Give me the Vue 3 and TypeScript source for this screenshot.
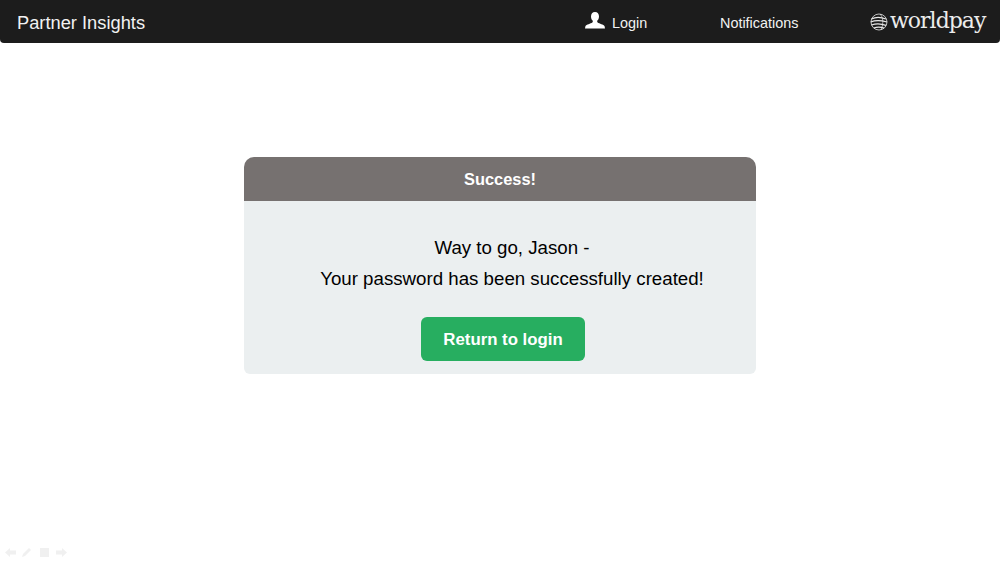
<template>
  <div class="page">
    <header class="topbar">
      <span class="brand">Partner Insights</span>
      <nav class="nav">
        <a class="nav-login">
          <svg class="user-icon" width="20" height="17" viewBox="0 0 20 17">
            <path d="M10 0C7.400 0 6 1.900 6 4.400c0 1.800.7 3.300 1.700 4.200.3.700.2 1.400-.3 1.800C5.600 11.700 1.500 12.200.4 14.200L0 16.500h20l-.4-2.300c-1.100-2-5.200-2.500-7-3.800-.5-.4-.6-1.100-.3-1.800 1-.9 1.700-2.400 1.700-4.200C14 1.900 12.600 0 10 0z" fill="#fff" />
          </svg>
          <span>Login</span>
        </a>
        <a class="nav-notifications">Notifications</a>
      </nav>
      <div class="logo">
        <svg class="globe" width="18" height="18" viewBox="0 0 18 18" fill="none" stroke="#e8e8e8">
          <circle cx="9" cy="9" r="8" stroke-width="0.800" />
          <path d="M1.500 6C5 4 10.500 3.800 16 6M.8 9c4-1.800 10-1.800 16.200 0M1.500 12c4-1.500 9.500-1.500 14.500.4M3.800 15c3-1.200 7-1.200 10.200.2" stroke-width="1.300" />
          <path d="M10 1c3 3 4 9 1 16" stroke-width="0.700" />
        </svg>
        <span class="logo-text">worldpay</span>
      </div>
    </header>

    <main class="main">
      <section class="card">
        <h1 class="card-title">Success!</h1>
        <div class="card-body">
          <p class="message">
            Way to go, {{ userName }} -<br />
            Your password has been successfully created!
          </p>
          <button class="return-btn">Return to login</button>
        </div>
      </section>
    </main>

    <div class="slide-controls">
      <svg width="11" height="9" viewBox="0 0 11 9"><path d="M0 4.500 5 0v2.500h6v4H5V9z" /></svg>
      <svg width="11" height="9" viewBox="0 0 11 9"><path d="M0 9l1-3 6-6 2 2-6 6z" /></svg>
      <svg width="11" height="9" viewBox="0 0 11 9"><path d="M1 0h9v9H1z" /></svg>
      <svg width="11" height="9" viewBox="0 0 11 9"><path d="M11 4.500 6 0v2.500H0v4h6V9z" /></svg>
    </div>
  </div>
</template>

<script setup lang="ts">
const userName = 'Jason';
</script>

<style>
html,
body {
  margin: 0;
  background: #fff;
}
</style>

<style scoped>
.page {
  position: relative;
  height: 563px;
  overflow: hidden;
  font-family: "Liberation Sans", Arial, sans-serif;
}

.topbar {
  display: flex;
  align-items: center;
  height: 43px;
  padding: 2px 14px 0 17px;
  box-sizing: border-box;
  background: #1c1c1c;
  border-radius: 0 0 4px 4px;
  color: #fff;
}

.brand {
  width: 128px;
  font-size: 18.300px;
  white-space: nowrap;
  color: #f2f2f2;
}

.nav {
  display: flex;
  align-items: center;
  margin-left: 440px;
  font-size: 14.400px;
  color: #f2f2f2;
}

.nav-login {
  display: flex;
  align-items: center;
  gap: 7px;
  width: 135px;
}

.user-icon {
  margin-top: -5px;
}

.nav-notifications {
  width: 150px;
  white-space: nowrap;
}

.logo {
  display: flex;
  align-items: center;
  gap: 2px;
  margin-top: -5px;
}

.globe {
  flex: none;
  margin-top: 3px;
}

.logo-text {
  font-family: "DejaVu Serif", serif;
  font-size: 22px;
  letter-spacing: -1px;
  color: #ececec;
}

.main {
  display: flex;
  justify-content: center;
  padding-top: 114px;
}

.card {
  width: 512px;
  height: 217px;
  background: #ebeff0;
  border-radius: 10px 10px 6px 6px;
  overflow: hidden;
}

.card-title {
  margin: 0;
  height: 44px;
  line-height: 44px;
  background: #767170;
  color: #fff;
  font-size: 16.400px;
  font-weight: 700;
  text-align: center;
}

.card-body {
  display: flex;
  flex-direction: column;
  align-items: center;
  padding-top: 32px;
}

.message {
  margin: 0 0 0 24px;
  font-size: 18.700px;
  line-height: 30.500px;
  color: #000;
  text-align: center;
}

.return-btn {
  width: 164px;
  height: 44px;
  margin: 23px 0 0 6px;
  padding: 2px 0 0;
  border: 0;
  border-radius: 6px;
  background: #27ae60;
  color: #fff;
  font-family: inherit;
  font-size: 16.800px;
  font-weight: 700;
}

.slide-controls {
  position: absolute;
  left: 5px;
  bottom: 6px;
  display: flex;
  gap: 6px;
  fill: #f0f0f0;
}
</style>
